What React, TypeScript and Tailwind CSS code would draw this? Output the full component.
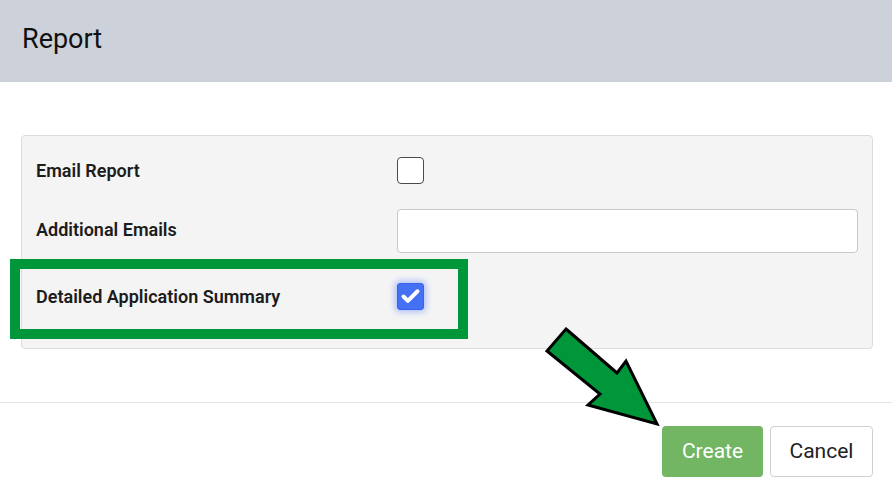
import { Check } from 'lucide-react';

const Checkbox = ({ checked }: { checked?: boolean }) => (
  <span
    className={
      checked
        ? 'flex h-[27px] w-[27px] items-center justify-center rounded-[3px] border border-[#3b63e8] bg-[#4470f4] shadow-[0_0_6px_2px_rgba(80,120,255,0.45)]'
        : 'block h-[27px] w-[27px] rounded-[4px] border border-[#4a4a4a] bg-white'
    }
  >
    {checked && <Check className="h-[21px] w-[21px] text-white" strokeWidth={4.5} />}
  </span>
);

const Row = ({
  label,
  children,
  className,
  labelClass,
}: {
  label: string;
  children: React.ReactNode;
  className?: string;
  labelClass?: string;
}) => (
  <div className={`flex items-center ${className ?? ''}`}>
    <div className={`w-[361px] text-[18px] font-semibold text-[#1c1c1c] ${labelClass ?? ''}`}>{label}</div>
    {children}
  </div>
);

export default function App() {
  return (
    <div className="relative flex h-[497px] w-[892px] flex-col overflow-hidden bg-white font-['Roboto',sans-serif]">
      <div className="flex h-[82px] items-center bg-[#cdd2da] pl-[22px]">
        <h1 className="pb-[3px] text-[27px] leading-none text-[#111]">Report</h1>
      </div>

      <div className="h-[320px] pl-[21px] pr-[19px] pt-[53px]">
        <div className="flex h-[214px] flex-col rounded-[4px] border border-[#dcdcdc] bg-[#f4f4f4] pl-[14px] pr-[14px] pt-[21px]">
          <Row label="Email Report" className="h-[27px]" labelClass="-mt-[1px]">
            <Checkbox />
          </Row>
          <Row label="Additional Emails" className="mt-[25px] h-[44px]" labelClass="-mt-[4px]">
            <div className="h-[44px] flex-1 rounded-[4px] border border-[#c8c8c8] bg-white" />
          </Row>
          <Row label="Detailed Application Summary" className="mt-[30px] h-[27px]" labelClass="-mt-[1px]">
            <Checkbox checked />
          </Row>
        </div>
      </div>

      <div className="flex flex-1 justify-end gap-[7px] border-t border-[#e4e4e4] pr-[19px] pt-[23px]">
        <button className="h-[51px] w-[101px] rounded-[4px] bg-[#72b663] text-[21px] text-white">Create</button>
        <button className="h-[51px] w-[103px] rounded-[4px] border border-[#cfcfcf] bg-white text-[21px] text-[#222]">
          Cancel
        </button>
      </div>

      {/* annotation overlay */}
      <div className="pointer-events-none absolute left-[10px] top-[259px] h-[80px] w-[458px] border-[10px] border-[#00963a]" />
      <svg className="pointer-events-none absolute left-0 top-0" width="892" height="497">
        <polygon
          points="566,329 617,373 626,361 657,424 588,405 600,394 547,351"
          fill="#00963a"
          stroke="#000"
          strokeWidth="3"
          strokeLinejoin="miter"
        />
      </svg>
    </div>
  );
}
